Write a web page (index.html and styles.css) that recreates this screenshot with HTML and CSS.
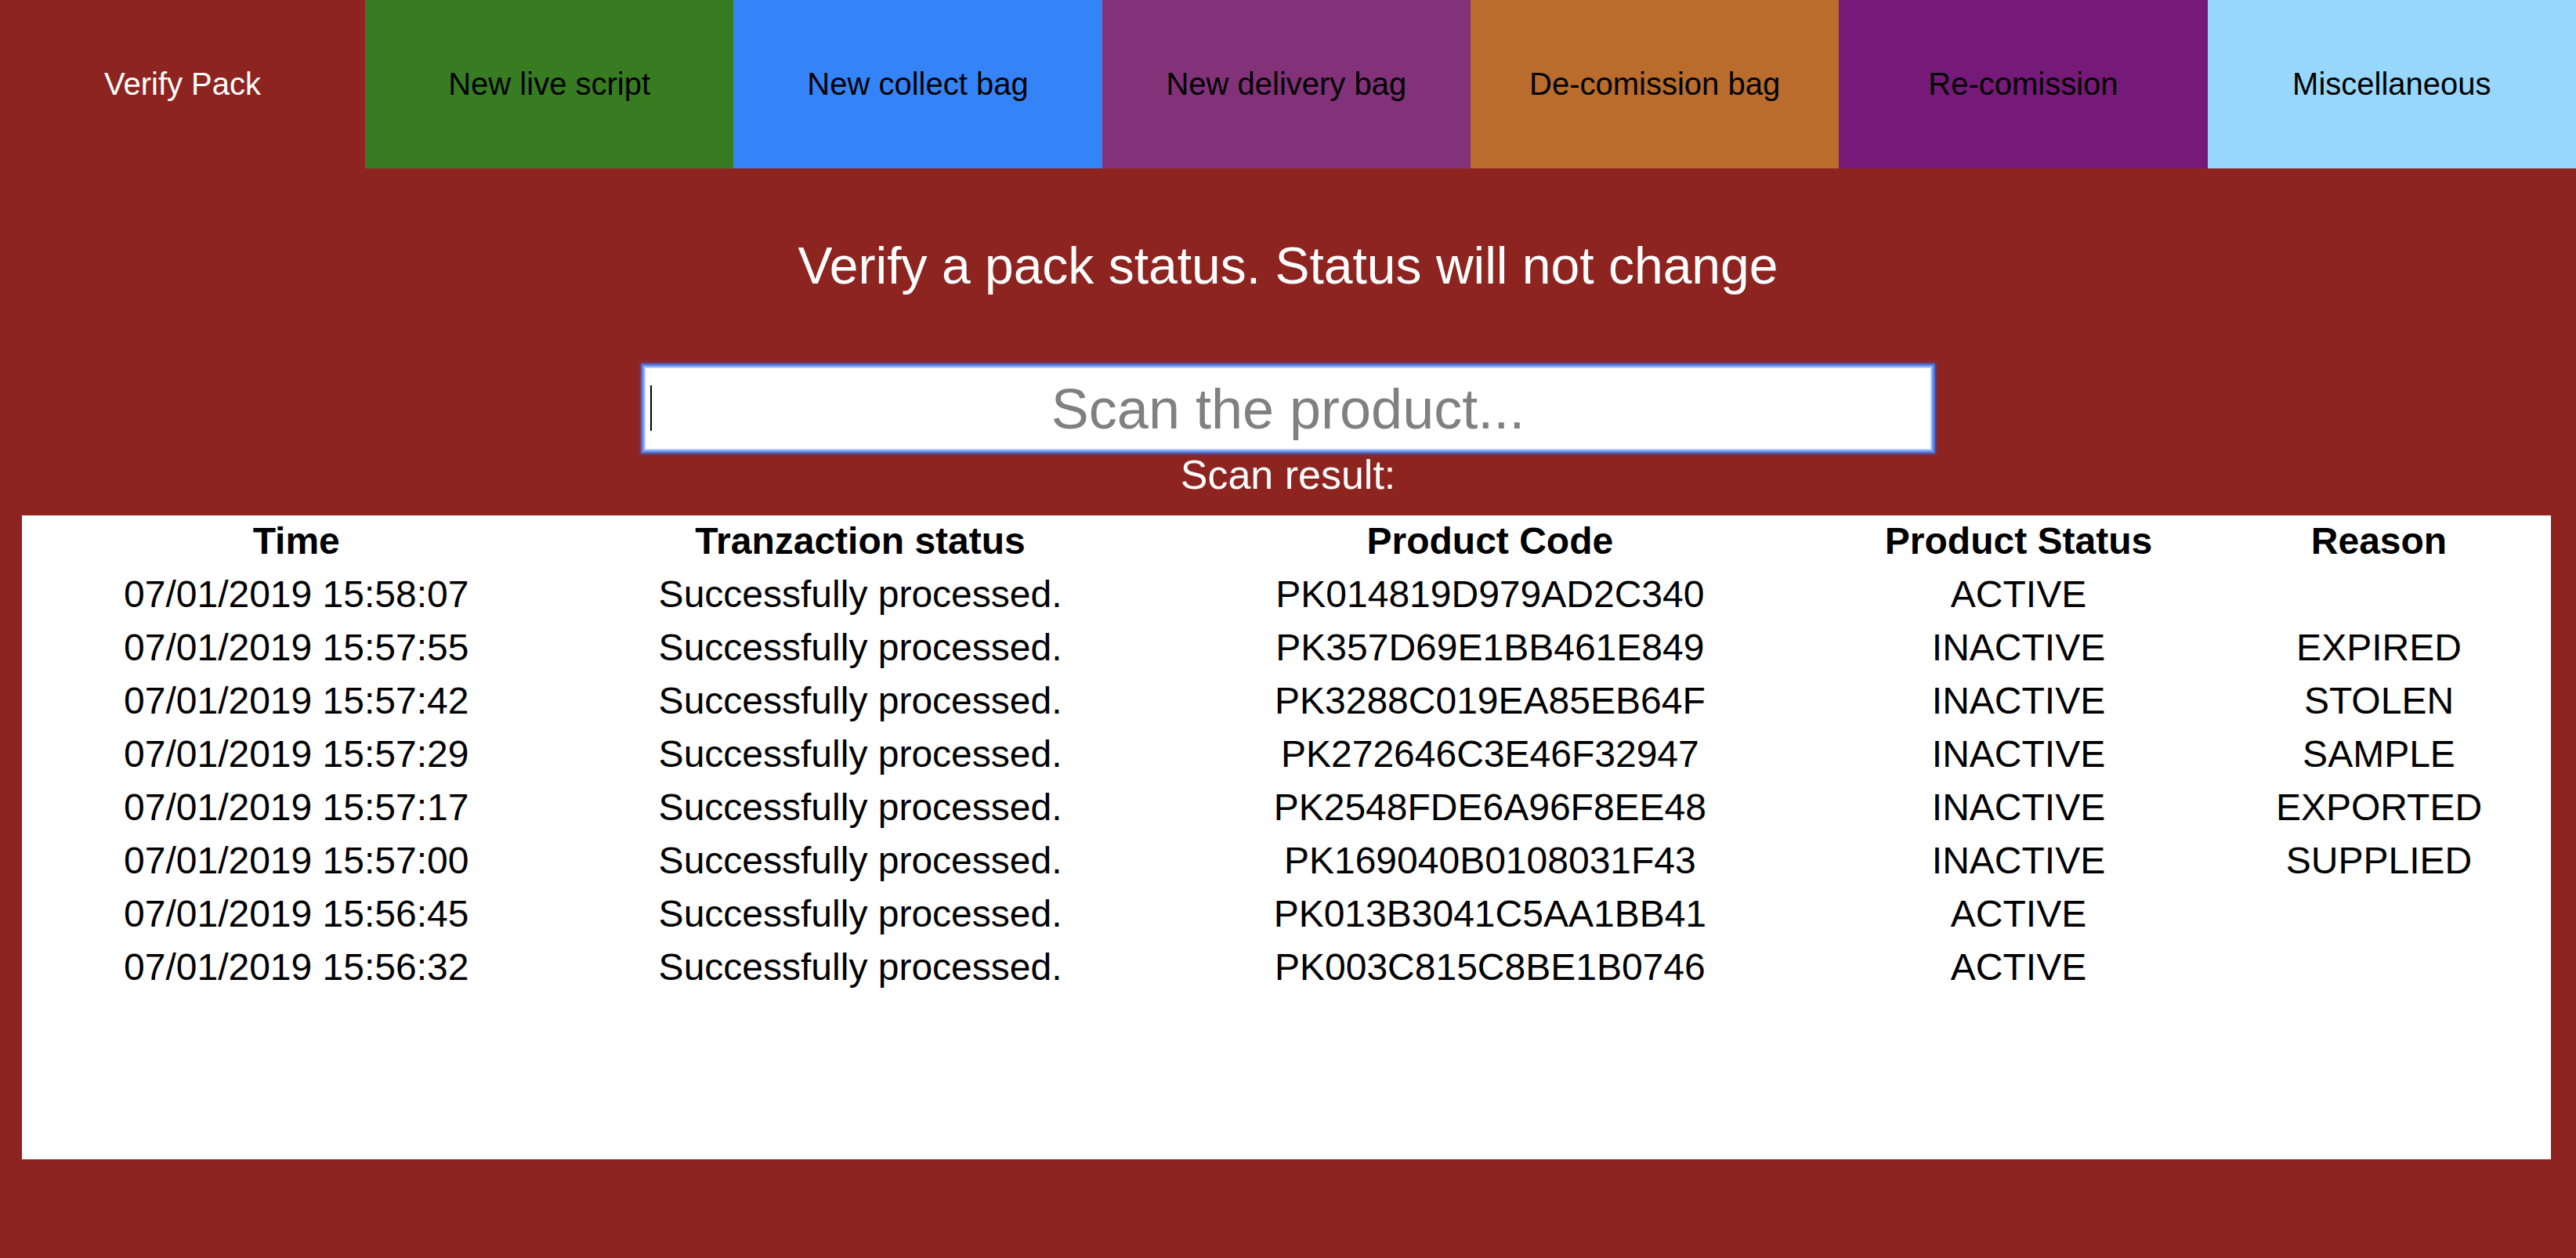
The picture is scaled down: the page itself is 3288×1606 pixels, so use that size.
FILE: index.html
```html
<!DOCTYPE html>
<html lang="en">
<head>
<meta charset="utf-8">
<title>Verify Pack</title>
<link rel="stylesheet" href="styles.css">
</head>
<body>
<nav class="tabs">
  <div class="tab tab-verify">Verify Pack</div>
  <div class="tab tab-live">New live script</div>
  <div class="tab tab-collect">New collect bag</div>
  <div class="tab tab-delivery">New delivery bag</div>
  <div class="tab tab-decom">De-comission bag</div>
  <div class="tab tab-recom">Re-comission</div>
  <div class="tab tab-misc">Miscellaneous</div>
</nav>
<main class="content">
  <h1 class="title">Verify a pack status. Status will not change</h1>
  <div class="scan-wrap">
    <div class="scan-field">
      <input class="scan-input" type="text" placeholder="Scan the product...">
      <span class="caret"></span>
    </div>
  </div>
  <div class="scan-label">Scan result:</div>
  <section class="results">
    <table class="results-table">
      <colgroup>
        <col class="c-time">
        <col class="c-status">
        <col class="c-code">
        <col class="c-pstatus">
        <col class="c-reason">
      </colgroup>
      <thead>
        <tr><th>Time</th><th>Tranzaction status</th><th>Product Code</th><th>Product Status</th><th>Reason</th></tr>
      </thead>
      <tbody>
        <tr><td>07/01/2019 15:58:07</td><td>Successfully processed.</td><td>PK014819D979AD2C340</td><td>ACTIVE</td><td></td></tr>
        <tr><td>07/01/2019 15:57:55</td><td>Successfully processed.</td><td>PK357D69E1BB461E849</td><td>INACTIVE</td><td>EXPIRED</td></tr>
        <tr><td>07/01/2019 15:57:42</td><td>Successfully processed.</td><td>PK3288C019EA85EB64F</td><td>INACTIVE</td><td>STOLEN</td></tr>
        <tr><td>07/01/2019 15:57:29</td><td>Successfully processed.</td><td>PK272646C3E46F32947</td><td>INACTIVE</td><td>SAMPLE</td></tr>
        <tr><td>07/01/2019 15:57:17</td><td>Successfully processed.</td><td>PK2548FDE6A96F8EE48</td><td>INACTIVE</td><td>EXPORTED</td></tr>
        <tr><td>07/01/2019 15:57:00</td><td>Successfully processed.</td><td>PK169040B0108031F43</td><td>INACTIVE</td><td>SUPPLIED</td></tr>
        <tr><td>07/01/2019 15:56:45</td><td>Successfully processed.</td><td>PK013B3041C5AA1BB41</td><td>ACTIVE</td><td></td></tr>
        <tr><td>07/01/2019 15:56:32</td><td>Successfully processed.</td><td>PK003C815C8BE1B0746</td><td>ACTIVE</td><td></td></tr>
      </tbody>
    </table>
  </section>
</main>
</body>
</html>
```
FILE: styles.css
```css
html, body {
  margin: 0;
  padding: 0;
}
body {
  background: #8e2420;
  font-family: "Liberation Sans", Arial, Helvetica, sans-serif;
  color: #000;
  min-height: 1606px;
}
.tabs {
  display: flex;
  height: 215px;
}
.tab {
  flex: 1 1 0;
  display: flex;
  align-items: center;
  justify-content: center;
  font-size: 40px;
  color: #000;
}
.tab-verify {
  flex: 0 0 466px;
  background: #8e2420;
  color: #fff;
}
.tab-live { background: #387c22; }
.tab-collect { background: #3584f7; }
.tab-delivery { background: #83327a; }
.tab-decom { background: #b96c2b; }
.tab-recom { background: #751a79; }
.tab-misc { background: #96d7fb; }

.content {
  display: flex;
  flex-direction: column;
  align-items: stretch;
}
.title {
  margin: 88px 0 92px;
  font-size: 66px;
  font-weight: normal;
  line-height: 73px;
  color: #fff;
  text-align: center;
}
.scan-wrap {
  display: flex;
  justify-content: center;
}
.scan-field {
  position: relative;
  width: 1644px;
}
.scan-input {
  display: block;
  box-sizing: border-box;
  width: 100%;
  height: 107px;
  margin: 0;
  padding: 0 10px;
  border: 2px solid #b3cdf7;
  background: #fff;
  font-family: "Liberation Sans", Arial, Helvetica, sans-serif;
  font-size: 72px;
  text-align: center;
  color: #000;
  outline: none;
  box-shadow: 0 0 0 2px #6d95ec, 0 0 0 4px #4f6fd6, 0 0 5px 5px rgba(80, 90, 190, 0.55);
}
.scan-input::placeholder {
  color: #808080;
}
.caret {
  position: absolute;
  left: 8px;
  top: 24px;
  width: 2px;
  height: 58px;
  background: #000;
}
.scan-label {
  margin-top: 1px;
  font-size: 52px;
  line-height: 60px;
  color: #fff;
  text-align: center;
}
.results {
  margin: 22px 32px 0 28px;
  height: 822px;
  background: #fff;
}
.results-table {
  width: 100%;
  border-collapse: separate;
  border-spacing: 0;
  table-layout: fixed;
}
.c-time { width: 21.7%; }
.c-status { width: 22.9%; }
.c-code { width: 26.9%; }
.c-pstatus { width: 14.9%; }
.c-reason { width: 13.6%; }
.results-table th,
.results-table td {
  padding: 5px 0 7px;
  font-size: 48px;
  line-height: 56px;
  text-align: center;
  white-space: nowrap;
}
.results-table th {
  font-weight: bold;
}
```
